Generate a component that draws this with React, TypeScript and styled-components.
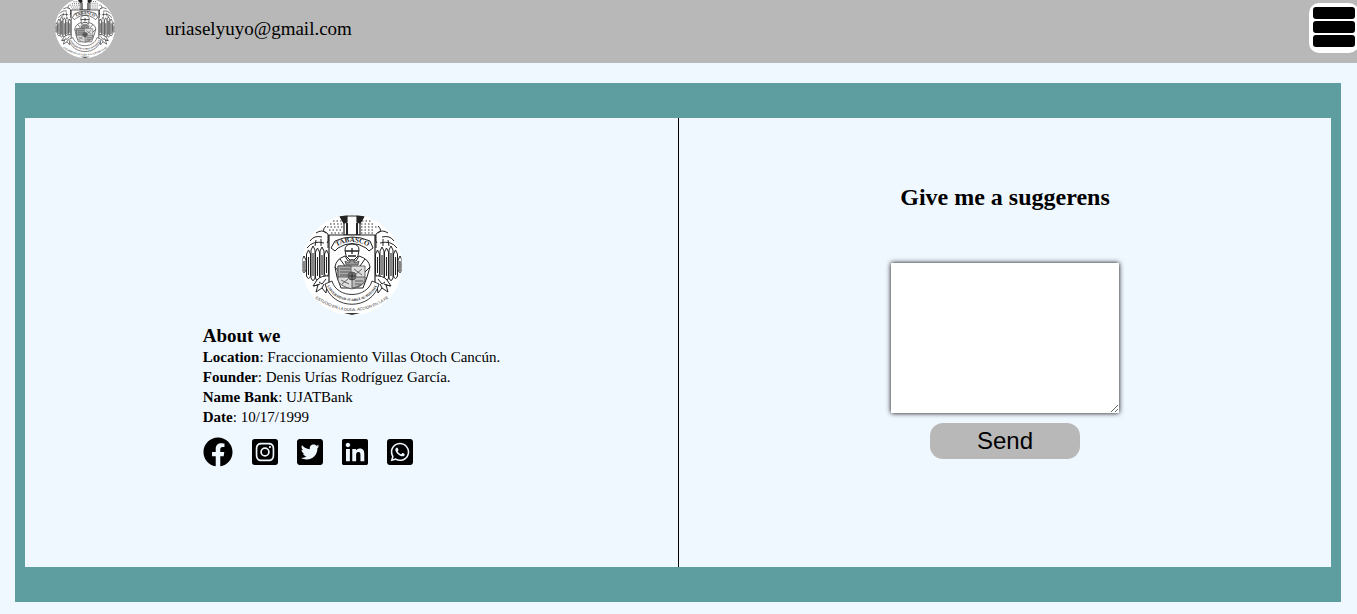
import React, { useId } from "react";
import styled, { createGlobalStyle } from "styled-components";
import {
  FaFacebook,
  FaInstagramSquare,
  FaLinkedin,
  FaTwitterSquare,
  FaWhatsappSquare,
} from "react-icons/fa";

const GlobalStyle = createGlobalStyle`
  * {
    box-sizing: border-box;
    margin: 0;
    padding: 0;
  }

  body {
    background: #f0f8ff;
    color: #000;
    font-family: "Liberation Serif", "Times New Roman", serif;
  }
`;

const Header = styled.header`
  display: flex;
  align-items: flex-start;
  height: 63px;
  padding-left: 55px;
  background: #b8b8b8;
  overflow: hidden;
`;

const HeaderLogo = styled.div`
  flex: none;
  height: 60px;
  margin-top: -2px;
`;

const Email = styled.p`
  margin-left: 50px;
  padding-top: 17px;
  font-size: 19px;
  line-height: 23px;
`;

const MenuButton = styled.button`
  display: flex;
  flex: none;
  flex-direction: column;
  gap: 2px;
  width: 50px;
  height: 50px;
  margin: 3px -2px 0 auto;
  padding: 4px;
  border: none;
  border-radius: 10px;
  background: #fff;
  cursor: pointer;
`;

const MenuBar = styled.span`
  width: 100%;
  height: 12px;
  border-radius: 3px;
  background: #000;
`;

const Panel = styled.main`
  display: grid;
  grid-template-columns: 1fr 1fr;
  min-height: calc(100vh - 95px);
  margin: 20px 16px 12px 15px;
  padding: 35px 10px;
  background: #5f9ea0;
`;

const Column = styled.section<{ $divided?: boolean }>`
  display: flex;
  flex-direction: column;
  align-items: center;
  justify-content: center;
  padding-bottom: ${({ $divided }) => ($divided ? "42px" : "4px")};
  border-left: ${({ $divided }) => ($divided ? "1px solid #000" : "none")};
  background: #f0f8ff;
`;

const About = styled.div`
  display: flex;
  flex-direction: column;
`;

const AboutLogo = styled.div`
  align-self: center;
  height: 100px;
  margin-bottom: 9px;
`;

const AboutTitle = styled.h3`
  font-size: 19px;
  line-height: 23px;
`;

const Fact = styled.p`
  font-size: 15px;
  line-height: 20px;
`;

const Socials = styled.nav`
  display: flex;
  align-items: center;
  gap: 19px;
  margin-top: 10px;
`;

const SocialLink = styled.a<{ $width: number }>`
  display: flex;
  color: #000;

  svg {
    width: ${({ $width }) => $width}px;
    height: 30px;
  }
`;

const Form = styled.form`
  display: flex;
  flex-direction: column;
  align-items: center;
`;

const FormTitle = styled.label`
  margin-bottom: 52px;
  font-size: 24px;
  font-weight: bold;
  line-height: 27px;
`;

const Message = styled.textarea`
  width: 228px;
  height: 150px;
  padding: 4px;
  border: none;
  background: #fff;
  box-shadow: 0 0 5px #000;
`;

const SendButton = styled.button`
  width: 150px;
  height: 36px;
  margin-top: 10px;
  border: none;
  border-radius: 13px;
  background: #b8b8b8;
  color: #000;
  font-family: "Liberation Sans", Arial, sans-serif;
  font-size: 24px;
  line-height: 27px;
  padding-bottom: 2px;
  cursor: pointer;
`;

const feathers = [
  [0, 42, 58],
  [4.5, 36, 64],
  [9, 32, 66],
  [13.5, 34, 66],
  [18, 33, 65],
  [22.5, 36, 62],
];

const Wing = () => (
  <g fill="#fff" stroke="#222" strokeWidth="1">
    <path d="M14 18 Q20 14 25 18 Q29 23 25 28 M8 26 Q12 20 20 22 M5 33 Q11 25 22 28 M19 24 V31 M14 25 L13 31" fill="none" />
    <path d="M24 11 Q19 16 24 18 M26 20 V33" fill="none" />
    {feathers.map(([x, top, bottom]) => (
      <path
        key={x}
        d={`M${x} ${bottom - 3} V${top + 3} L${x + 2} ${top - 1} L${x + 4} ${top + 3} V${bottom - 3} Q${x + 2} ${bottom + 2} ${x} ${bottom - 3} Z`}
      />
    ))}
    <path d="M2 46 V56 M6.500 42 V60 M11 38 V61 M15.500 42 V61 M20 40 V60 M24.500 42 V58" strokeWidth="1.100" />
    <path d="M29 61 Q19 60 15 65 L11 71 L16 70 L14 77 L20 73 L24 78 L25 71 L30 68" />
    <path d="M17 67 L20 69 L24 64 M12 71 L18 69 M20 73 L22 69" fill="none" />
  </g>
);

const Emblem = ({ size }: { size: number }) => {
  const id = useId();
  return (
    <svg width={size} height={size} viewBox="0 0 100 100" role="img" aria-label="Crest">
      <defs>
        <clipPath id={`${id}round`}>
          <circle cx="50" cy="50" r="50" />
        </clipPath>
        <path id={`${id}top`} d="M31 34 Q50 20 70 34" />
        <path id={`${id}ribbon`} d="M24 68 C31 92 69 92 76 68" />
        <path id={`${id}motto`} d="M9 80 Q50 112 91 80" />
      </defs>
      <g clipPath={`url(#${id}round)`}>
        <rect width="100" height="100" fill="#fff" />
        <g fill="none" stroke="#333" strokeWidth="1.200" strokeDasharray="1.500 2">
          <path d="M31 6 H40 M28 9 H41 M25 12 H41 M27 15 H41 M29 18 H41" />
          <path d="M60 6 H69 M59 9 H72 M59 12 H75 M59 15 H73 M59 18 H71" />
        </g>
        <Wing />
        <g transform="translate(100 0) scale(-1 1)">
          <Wing />
        </g>
        <g fill="#fff" stroke="#222" strokeWidth="1.200">
          <path d="M38 1 L42 8 V20 H58 V8 L62 1 Z" />
          <path d="M45 8 V20 M55 8 V20" strokeWidth="2" />
          <path d="M38 1 L45 1 L45 7 L42 8 Z M62 1 H55 V7 L58 8 Z" fill="#222" />
        </g>
        <path
          d="M27 20 H73 V70 Q69 81 50 87 Q31 81 27 70 Z"
          fill="#fff"
          stroke="#222"
          strokeWidth="1.200"
        />
        <g fill="#fff" stroke="#222" strokeWidth="1">
          <path d="M33 52 Q34 44 43 41 L46 46 H54 L57 41 Q67 44 68 52 L65 62 L61 73 H39 L35 62 Z" />
          <path d="M33 52 L38 58 M68 52 L62 58 M38 44 L43 51 M63 44 L58 51" />
          <path d="M43 35 Q43 29 50 29 Q57 29 57 35 L56 41 L52 45 H48 L44 41 Z" />
          <path d="M43 36 H57 M46 41 H54 M50 33 V39" strokeWidth="1.300" />
          <path d="M29 33 L33 26 Q50 18 68 26 L71 33 L67 36 L64 33 Q50 24 36 33 L33 36 Z" />
        </g>
        <g stroke="#444" strokeWidth="0.800">
          <path d="M36 51 H63 V65 Q62 71 50 74 Q37 71 36 65 Z" fill="#ddd" />
          <path d="M36 51 H49 V62 H36 Z" fill="#aaa" />
          <path d="M50 62 H63 V66 Q60 71 50 73 Z" fill="#bbb" />
          <path d="M38 54 H48 M38 57 H48 M38 60 H47 M52 54 L60 60 M53 60 L60 54 M39 65 L47 69 M40 69 L46 64 M53 66 H61 M53 69 H59" />
          <path d="M44 50 L43 46 L47 48 L50 44 L53 48 L57 46 L56 50 Z" fill="#999" />
          <circle cx="50" cy="61" r="4" fill="#777" />
          <path d="M50 58 V65 M47 61 H53" stroke="#222" />
        </g>
        <path
          d="M23 69 L30 66 C35 84 65 84 70 66 L77 69 C70 96 30 96 23 69 Z"
          fill="#fff"
          stroke="#222"
          strokeWidth="0.900"
        />
        <g fill="#222" fontFamily="Liberation Serif, serif">
          <text fontSize="7" fontWeight="bold">
            <textPath href={`#${id}top`} startOffset="50%" textAnchor="middle">
              TABASCO
            </textPath>
          </text>
          <text fontSize="3.500" fontWeight="bold">
            <textPath href={`#${id}ribbon`} startOffset="50%" textAnchor="middle">
              UNIVERSIDAD JUAREZ AUTONOMA
            </textPath>
          </text>
          <text fontSize="4" fontFamily="Liberation Sans, sans-serif">
            <textPath href={`#${id}motto`} startOffset="50%" textAnchor="middle">
              ESTUDIO EN LA DUDA. ACCION EN LA FE
            </textPath>
          </text>
        </g>
        <path d="M42 98 H58 L50 100 Z" fill="#333" />
      </g>
    </svg>
  );
};

const facts = [
  ["Location", "Fraccionamiento Villas Otoch Cancún."],
  ["Founder", "Denis Urías Rodríguez García."],
  ["Name Bank", "UJATBank"],
  ["Date", "10/17/1999"],
];

const socials = [
  { name: "Facebook", Icon: FaFacebook, width: 30 },
  { name: "Instagram", Icon: FaInstagramSquare, width: 26 },
  { name: "Twitter", Icon: FaTwitterSquare, width: 26 },
  { name: "LinkedIn", Icon: FaLinkedin, width: 26 },
  { name: "WhatsApp", Icon: FaWhatsappSquare, width: 26 },
];

export default function App() {
  return (
    <>
      <GlobalStyle />
      <Header>
        <HeaderLogo>
          <Emblem size={60} />
        </HeaderLogo>
        <Email>uriaselyuyo@gmail.com</Email>
        <MenuButton type="button" aria-label="Menu">
          <MenuBar />
          <MenuBar />
          <MenuBar />
        </MenuButton>
      </Header>
      <Panel>
        <Column>
          <About>
            <AboutLogo>
              <Emblem size={100} />
            </AboutLogo>
            <AboutTitle>About we</AboutTitle>
            {facts.map(([label, value]) => (
              <Fact key={label}>
                <b>{label}</b>: {value}
              </Fact>
            ))}
            <Socials>
              {socials.map(({ name, Icon, width }) => (
                <SocialLink key={name} href="#" aria-label={name} $width={width}>
                  <Icon />
                </SocialLink>
              ))}
            </Socials>
          </About>
        </Column>
        <Column $divided>
          <Form onSubmit={(event) => event.preventDefault()}>
            <FormTitle htmlFor="message">Give me a suggerens</FormTitle>
            <Message id="message" />
            <SendButton type="submit">Send</SendButton>
          </Form>
        </Column>
      </Panel>
    </>
  );
}
